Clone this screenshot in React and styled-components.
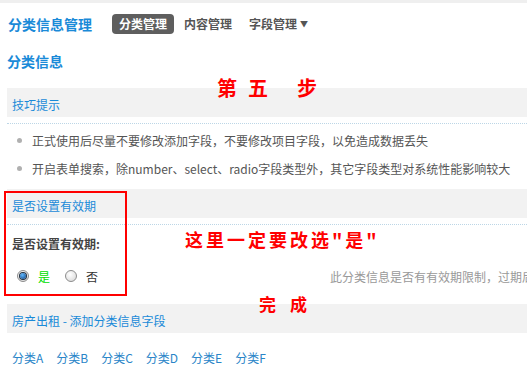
import React from "react";
import styled, { createGlobalStyle } from "styled-components";

const Global = createGlobalStyle`
  html, body { margin: 0; padding: 0; overflow: hidden; background: #fff; }
  body { font-family: "Microsoft YaHei", "Noto Sans CJK SC", "Noto Sans", sans-serif; font-size: 12px; color: #555; }
`;

const BLUE = "#1a8ad8";

const Page = styled.div`
  position: relative;
  width: 527px;
  height: 374px;
  overflow: hidden;
  border-top: 3px solid #efefef;
  box-sizing: border-box;
`;

const Header = styled.div`
  display: flex;
  align-items: center;
  height: 20px;
  padding: 11px 0 0 8px;
`;

const Title = styled.div`
  color: ${BLUE};
  font-size: 14px;
  font-weight: 700;
  margin-right: 20px;
`;

const Tabs = styled.div`
  display: flex;
  align-items: center;
`;

const Tab = styled.div`
  height: 20px;
  line-height: 20px;
  padding: 0 ${(p) => (p.$active ? "7px" : "0")};
  margin-right: ${(p) => p.$gap || 0}px;
  border-radius: 4px;
  font-size: 12px;
  font-weight: 700;
  color: ${(p) => (p.$active ? "#fff" : "#555")};
  background: ${(p) => (p.$active ? "#5e5e5e" : "transparent")};
  display: flex;
  align-items: center;
`;

const Caret = styled.span`
  font-size: 8px;
  margin-left: 3px;
  color: #555;
`;

const SubTitle = styled.div`
  color: ${BLUE};
  font-size: 14px;
  font-weight: 700;
  line-height: 20px;
  margin: 17px 0 0 7px;
`;

const Content = styled.div`
  padding-left: 7px;
  width: 560px;
`;

const Band = styled.div`
  box-sizing: border-box;
  height: 29px;
  padding: 5px 5px 0;
  line-height: 24px;
  background: #f2f2f2;
  color: ${BLUE};
  font-size: 12px;
  margin-top: ${(p) => p.$mt || 0}px;
  white-space: nowrap;
`;

const Dotted = styled.div`
  margin-top: 6px;
  border-top: 1px dotted #bcd6e6;
`;

const List = styled.ul`
  list-style: none;
  margin: 2px 0 0;
  padding: 0;
`;

const Item = styled.li`
  display: flex;
  align-items: center;
  height: 28px;
  padding-left: 10px;
  white-space: nowrap;
  color: #555;
  &::before {
    content: "";
    width: 5px;
    height: 5px;
    border-radius: 50%;
    background: #b0b0b0;
    margin-right: 10px;
  }
`;

const FieldLabel = styled.div`
  margin: 9px 0 0 5px;
  line-height: 20px;
  color: #444;
  font-weight: 700;
`;

const RadioRow = styled.div`
  display: flex;
  align-items: center;
  height: 20px;
  margin-top: 12px;
  padding-left: 10px;
  white-space: nowrap;
`;

const RadioOpt = styled.label`
  display: flex;
  align-items: center;
  margin-right: ${(p) => p.$mr || 0}px;
  color: ${(p) => p.$color || "#333"};
`;

const Circle = styled.span`
  position: relative;
  box-sizing: border-box;
  width: 12px;
  height: 12px;
  border-radius: 50%;
  border: 1px solid #8c8c8c;
  background: radial-gradient(circle at 40% 35%, #ffffff, #d4d4d4);
  margin-right: 9px;
  &::after {
    content: "";
    display: ${(p) => (p.$checked ? "block" : "none")};
    position: absolute;
    left: 2px;
    top: 2px;
    width: 6px;
    height: 6px;
    border-radius: 50%;
    background: radial-gradient(circle at 40% 35%, #5fb8ff, #0b3f80);
    box-shadow: 0 0 0 1px #1f2f40;
  }
`;

const Hint = styled.div`
  margin-left: 232px;
  color: #999;
`;

const Cats = styled.div`
  display: flex;
  gap: 13px;
  margin-top: 15px;
  padding-left: 5px;
  line-height: 20px;
  color: #2a85c8;
`;

const Note = styled.div`
  position: absolute;
  left: ${(p) => p.$x}px;
  top: ${(p) => p.$y}px;
  color: #ff0000;
  font-weight: 700;
  font-size: ${(p) => p.$size}px;
  letter-spacing: ${(p) => p.$ls || 0}px;
  line-height: 1;
  white-space: pre;
  display: flex;
`;

const NoteChar = styled.span`
  margin-right: ${(p) => p.$mr || 0}px;
`;

const RedBox = styled.div`
  position: absolute;
  left: 4px;
  top: 188px;
  width: 123px;
  height: 105px;
  box-sizing: border-box;
  border: 2px solid #ff0000;
  pointer-events: none;
`;

export default function App() {
  return (
    <>
      <Global />
      <Page>
        <Header>
          <Title>分类信息管理</Title>
          <Tabs>
            <Tab $active $gap={10}>分类管理</Tab>
            <Tab $gap={17}>内容管理</Tab>
            <Tab>
              字段管理<Caret>▼</Caret>
            </Tab>
          </Tabs>
        </Header>
        <SubTitle>分类信息</SubTitle>
        <Content>
          <Band $mt={17}>技巧提示</Band>
          <Dotted />
          <List>
            <Item>正式使用后尽量不要修改添加字段，不要修改项目字段，以免造成数据丢失</Item>
            <Item>开启表单搜索，除number、select、radio字段类型外，其它字段类型对系统性能影响较大</Item>
          </List>
          <Band $mt={7}>是否设置有效期</Band>
          <Dotted />
          <FieldLabel>是否设置有效期:</FieldLabel>
          <RadioRow>
            <RadioOpt $mr={15} $color="#00dd00">
              <Circle $checked />是
            </RadioOpt>
            <RadioOpt $color="#333">
              <Circle />否
            </RadioOpt>
            <Hint>此分类信息是否有有效期限制，过期后</Hint>
          </RadioRow>
          <Band $mt={18}>房产出租 - 添加分类信息字段</Band>
          <Cats>
            <span>分类A</span>
            <span>分类B</span>
            <span>分类C</span>
            <span>分类D</span>
            <span>分类E</span>
            <span>分类F</span>
          </Cats>
        </Content>
        <RedBox />
        <Note $x={217} $y={75} $size={20}>
          <NoteChar $mr={11}>第</NoteChar>
          <NoteChar $mr={29}>五</NoteChar>
          <NoteChar>步</NoteChar>
        </Note>
        <Note $x={185} $y={227} $size={18} $ls={3}>这里一定要改选"是"</Note>
        <Note $x={259} $y={292} $size={17}>
          <NoteChar $mr={14}>完</NoteChar>
          <NoteChar>成</NoteChar>
        </Note>
      </Page>
    </>
  );
}
